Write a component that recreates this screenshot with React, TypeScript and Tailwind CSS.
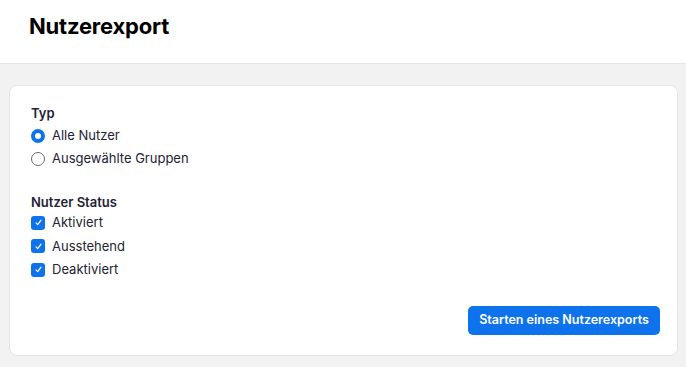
import React from 'react';

const Radio: React.FC<{ checked?: boolean; label: string }> = ({ checked, label }) => (
  <label className="flex items-center gap-[7px] h-[23px]">
    {checked ? (
      <span className="w-[14px] h-[14px] rounded-full border-[4px] border-[#0e72ed] bg-white" />
    ) : (
      <span className="w-[14px] h-[14px] rounded-full border border-[#6b6b6b] bg-white" />
    )}
    <span>{label}</span>
  </label>
);

const Check: React.FC<{ label: string }> = ({ label }) => (
  <label className="flex items-center gap-[7px] h-[23.5px]">
    <span className="w-[14px] h-[14px] rounded-[3px] bg-[#0e72ed] flex items-center justify-center">
      <svg width="9" height="9" viewBox="0 0 10 10" fill="none">
        <path d="M2.2 5.4 L4.1 7.4 L7.8 2.4" stroke="white" strokeWidth="1.3" strokeLinecap="round" strokeLinejoin="round" />
      </svg>
    </span>
    <span>{label}</span>
  </label>
);

const App: React.FC = () => {
  return (
    <div className="min-h-screen bg-[#f2f2f2] text-[#232333] font-['Inter',sans-serif]">
      <div className="h-[64px] bg-white border-b border-[#e4e4e4] px-[29px] flex items-center pb-[10px]">
        <h1 className="text-[22px] font-bold text-black tracking-[-0.2px]">Nutzerexport</h1>
      </div>

      <div className="mt-[21px] ml-[9px] mr-[8px] bg-white border border-[#e4e4e4] rounded-[8px] pl-[21px] pr-[17px] pt-[20px] pb-[20px] text-[13px]">
        <div className="font-semibold leading-[14px] mb-[4px]">Typ</div>
        <Radio checked label="Alle Nutzer" />
        <Radio label="Ausgewählte Gruppen" />

        <div className="font-semibold leading-[14px] mt-[25px] mb-[2px]">Nutzer Status</div>
        <Check label="Aktiviert" />
        <Check label="Ausstehend" />
        <Check label="Deaktiviert" />

        <div className="flex justify-end mt-[24px]">
          <button className="h-[29px] w-[192px] rounded-[5px] bg-[#0e72ed] text-white font-semibold text-[12.5px]">
            Starten eines Nutzerexports
          </button>
        </div>
      </div>
    </div>
  );
};

export default App;
